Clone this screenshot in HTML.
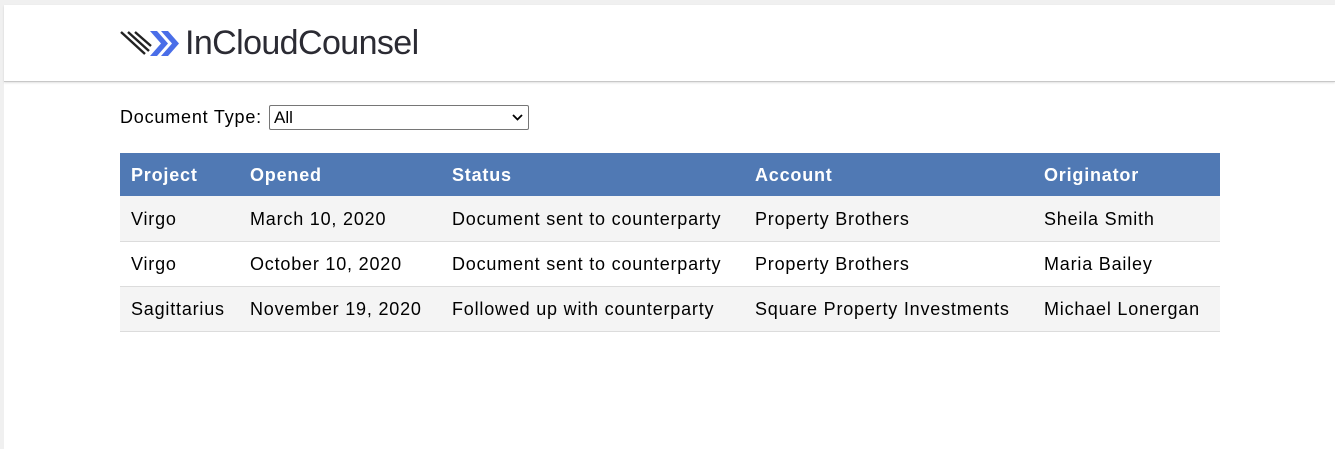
<!DOCTYPE html>
<html><head><meta charset="utf-8"><style>
html,body{margin:0;padding:0;}
body{width:1335px;height:449px;background:#f0f0f0;font-family:"Liberation Sans",Arial,sans-serif;position:relative;overflow:hidden;}
.page{position:absolute;left:4px;top:5px;right:0;bottom:0;background:#fff;}
.hdr{position:absolute;left:0;right:0;top:0;height:76px;border-bottom:1px solid #c8c8c8;box-shadow:0 1px 2px rgba(0,0,0,.12);}
.logo{position:absolute;left:116px;top:26px;}
.brand{position:absolute;left:181px;top:19px;font-size:34px;color:#2b2b33;letter-spacing:-0.6px;font-family:"Liberation Sans",sans-serif;}
.filter{position:absolute;left:116px;top:102px;font-size:18px;color:#000;letter-spacing:0.8px;}
.sel{position:absolute;left:265px;top:100px;width:254px;height:23px;border:1px solid #767676;border-radius:2px;font-size:17px;line-height:24px;padding-left:4px;box-sizing:content-box;}
.sel svg{position:absolute;right:5px;top:8px;}
table{position:absolute;left:116px;top:148px;width:1100px;border-collapse:collapse;font-size:18px;letter-spacing:0.8px;}
th{background:#5079b4;color:#fff;text-align:left;height:43px;padding:2px 0 0 11px;font-weight:bold;box-sizing:border-box;}
td{height:45px;padding:2px 0 0 11px;border-bottom:1px solid #dcdcdc;color:#000;box-sizing:border-box;}
tr.g td{background:#f4f4f4;}
</style></head><body><div class="page">
<div class="hdr">
<svg class="logo" width="62" height="28" viewBox="0 0 62 28">
<g stroke="#222" stroke-width="2.4">
<line x1="1" y1="1" x2="25" y2="23"/><line x1="8" y1="1" x2="29" y2="20"/><line x1="15" y1="1" x2="31" y2="15"/>
</g>
<path d="M30 0h7l11 12.5-11 12.5h-7l11-12.5z" fill="#4a6ee8"/>
<path d="M41 0h7l11 12.5-11 12.5h-7l11-12.5z" fill="#4a6ee8"/>
</svg>
<div class="brand">InCloudCounsel</div>
</div>
<div class="filter">Document Type:</div>
<div class="sel">All<svg width="11" height="7" viewBox="0 0 11 7"><path d="M1 1l4.5 4.5L10 1" stroke="#000" stroke-width="1.8" fill="none"/></svg></div>
<table>
<tr><th style="width:119px">Project</th><th style="width:202px">Opened</th><th style="width:303px">Status</th><th style="width:289px">Account</th><th>Originator</th></tr>
<tr class="g"><td>Virgo</td><td>March 10, 2020</td><td>Document sent to counterparty</td><td>Property Brothers</td><td>Sheila Smith</td></tr>
<tr><td>Virgo</td><td>October 10, 2020</td><td>Document sent to counterparty</td><td>Property Brothers</td><td>Maria Bailey</td></tr>
<tr class="g"><td>Sagittarius</td><td>November 19, 2020</td><td>Followed up with counterparty</td><td>Square Property Investments</td><td>Michael Lonergan</td></tr>
</table>
</div></body></html>
